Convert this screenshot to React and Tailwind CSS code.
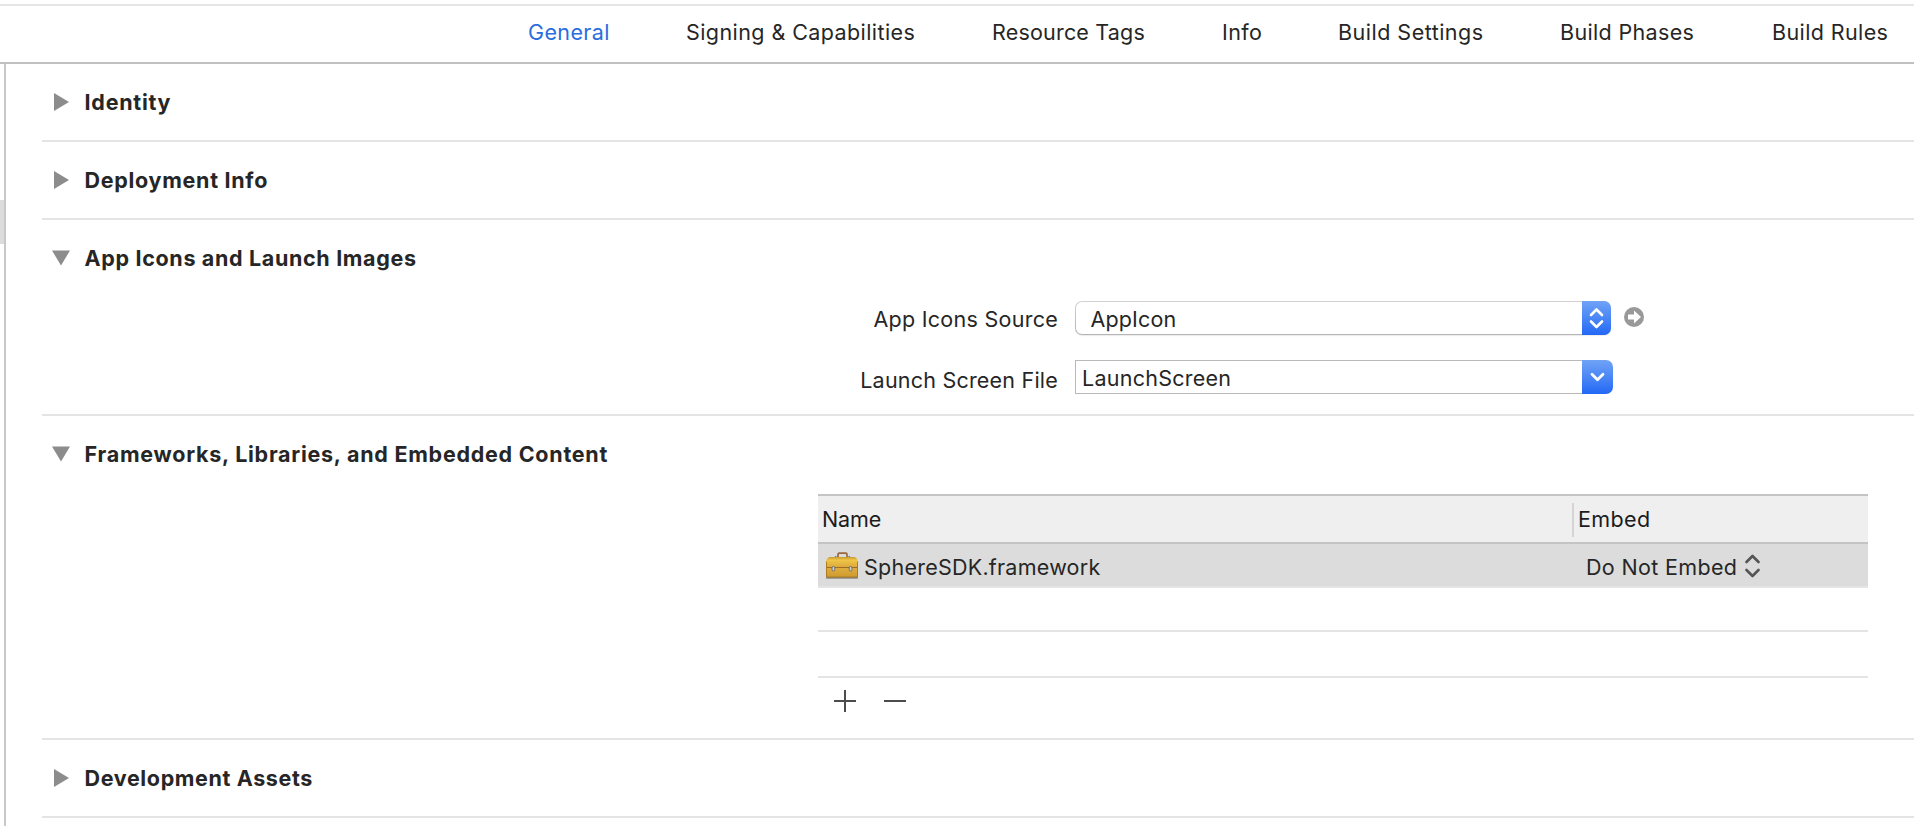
import React from 'react'

const tabs = [
  { label: 'General', className: 'text-[#2a6de0] tracking-[0.38px]' },
  { label: 'Signing & Capabilities', className: 'tracking-[0.42px]' },
  { label: 'Resource Tags', className: 'tracking-[0.19px]' },
  { label: 'Info', className: 'tracking-[0.36px]' },
  { label: 'Build Settings', className: 'tracking-[0.49px]' },
  { label: 'Build Phases', className: 'tracking-[0.34px]' },
  { label: 'Build Rules', className: 'tracking-[0.39px]' },
]

function TabBar() {
  return (
    <nav className="mt-1 grid h-[60px] shrink-0 grid-cols-[158px_306px_230px_116px_222px_212px_1fr] items-center border-y-2 border-t-[#e6e6e6] border-b-[#c0c0c0] pb-[5px] pl-[528px]">
      {tabs.map((t) => (
        <a key={t.label} className={t.className}>{t.label}</a>
      ))}
    </nav>
  )
}

function Disclosure({ open }) {
  return (
    <svg width="18" height="18" viewBox="0 0 18 18" className="shrink-0" fill="#8c8c8c">
      {open ? <path d="M0 1.5H18L9 16.5Z" /> : <path d="M2 0V18L17 9Z" />}
    </svg>
  )
}

function Section({ title, open = false, tracking, children }) {
  return (
    <section className="border-b-2 border-[#e4e4e4]">
      <h2 className="flex h-[76px] items-center gap-[14.6px] pl-[10px] font-bold">
        <span className="-mt-px flex"><Disclosure open={open} /></span>
        <span className={tracking}>{title}</span>
      </h2>
      {children}
    </section>
  )
}

function UpDown() {
  return (
    <svg width="29" height="34" viewBox="0 0 29 34" fill="none" stroke="#fff" strokeWidth="2.6" strokeLinecap="round" strokeLinejoin="round">
      <path d="M9 14L14.5 8.500L20 14M9 20.500L14.500 26L20 20.500" />
    </svg>
  )
}

function LaunchForm() {
  return (
    <div className="grid grid-cols-[1016px_auto] gap-x-[17px] pt-[5px] pb-[20px]">
      <label className="flex h-[34px] items-center justify-end pt-[1px] tracking-[0.27px]">App Icons Source</label>
      <div className="flex items-center gap-[13px]">
        <div className="flex h-[34px] w-[536px] overflow-hidden rounded-[7px] bg-gradient-to-b from-[#d2d2d2] to-[#b4b4b4] shadow-[0_1px_1px_rgba(0,0,0,0.08)]">
          <div className="my-px ml-px flex flex-1 items-center rounded-l-[6px] bg-white pt-[1px] pl-[14.5px] tracking-[0.15px]">AppIcon</div>
          <div className="w-[29px] bg-gradient-to-b from-[#70a3f5] to-[#2267f5]"><UpDown /></div>
        </div>
        <svg width="20" height="20" viewBox="0 0 20 20" className="-mt-[2px]">
          <circle cx="10" cy="10" r="10" fill="#999" />
          <path d="M4 7.500H10V3.500L17 10L10 16.500V12.500H4Z" fill="#fff" />
        </svg>
      </div>
      <label className="mt-[25px] flex h-[34px] items-center justify-end pt-[6px] tracking-[0.21px]">Launch Screen File</label>
      <div className="mt-[25px] flex h-[34px] w-[538px]">
        <div className="flex flex-1 items-center border border-r-0 border-[#b9b9b9] pt-[2px] pl-[6px] tracking-[0.25px]">LaunchScreen</div>
        <div className="w-[31px] overflow-hidden rounded-r-[7px] bg-gradient-to-b from-[#70a3f5] to-[#2267f5]">
          <svg width="31" height="34" viewBox="0 0 31 34" fill="none" stroke="#fff" strokeWidth="2.8" strokeLinecap="round" strokeLinejoin="round">
            <path d="M10 14.2L15.5 19.8L21 14.2" />
          </svg>
        </div>
      </div>
    </div>
  )
}

function Toolbox() {
  return (
    <svg width="32" height="28" viewBox="0 0 32 28" className="mt-[2px] shrink-0">
      <defs>
        <linearGradient id="lid" x1="0" y1="0" x2="0" y2="1">
          <stop offset="0" stopColor="#c99a2c" />
          <stop offset="0.3" stopColor="#efc648" />
          <stop offset="1" stopColor="#dba83a" />
        </linearGradient>
        <linearGradient id="box" x1="0" y1="0" x2="0" y2="1">
          <stop offset="0" stopColor="#dfae3f" />
          <stop offset="1" stopColor="#cf9a2e" />
        </linearGradient>
      </defs>
      <path d="M12 5.500V2.500Q12 1.200 13.200 1.200H19.800Q21 1.200 21 2.500V5.500" fill="none" stroke="#9a673a" strokeWidth="1.700" />
      <path d="M9 6L10 4M24 6L23 4" stroke="#777" strokeWidth="1.600" />
      <rect x="0" y="24.500" width="32" height="2.300" rx="0.800" fill="#8d8880" />
      <path d="M0 15.500V9.500Q1 5 4.500 5H27.500Q31 5 32 9.500V15.500Z" fill="url(#lid)" />
      <path d="M0 15.500H32V25H0Z" fill="url(#box)" />
      <path d="M0 15.500H32" stroke="#a06c1e" strokeWidth="1" />
      <path d="M0.500 25H31.500M0.500 9.500V25M31.500 9.500V25" stroke="#a87820" strokeWidth="0.900" />
      <rect x="6" y="14.500" width="2.800" height="4.500" rx="1.300" fill="#c9ccd0" stroke="#666" strokeWidth="0.900" />
      <rect x="23.200" y="14.500" width="2.800" height="4.500" rx="1.300" fill="#c9ccd0" stroke="#666" strokeWidth="0.900" />
    </svg>
  )
}

function FrameworksTable() {
  return (
    <div className="mt-[2px] ml-[776px] w-[1050px]">
      <div className="flex h-[50px] items-center border-y-2 border-[#c4c4c4] bg-[#efefef] text-[#1c1c1c]">
        <div className="flex-1 pb-[1px] pl-[4px] -tracking-[0.1px]">Name</div>
        <div className="mb-[-1px] h-[34px] w-[2px] bg-[#d4d4d4]" />
        <div className="w-[294px] pb-[1px] pl-[4px] tracking-[0.39px]">Embed</div>
      </div>
      <div className="flex h-[44px] items-center border-b-2 border-[#e4e4e4] bg-[#dcdcdc]">
        <div className="flex flex-1 items-center gap-[6px] pl-[8px]">
          <Toolbox />
          <span className="pt-[3px] tracking-[0.24px]">SphereSDK.framework</span>
        </div>
        <div className="flex w-[282px] items-center gap-[8px]">
          <span className="pt-[3px] tracking-[0.34px]">Do Not Embed</span>
          <svg width="15" height="24" viewBox="0 0 15 24" className="mt-[2px]" fill="none" stroke="#555" strokeWidth="2.600" strokeLinecap="round" strokeLinejoin="round">
            <path d="M1.500 8L7.500 2L13.500 8M1.500 16L7.500 22L13.500 16" />
          </svg>
        </div>
      </div>
      <div className="h-[44px] border-b-2 border-[#e4e4e4]" />
      <div className="h-[46px] border-b-2 border-[#e4e4e4]" />
      <div className="flex h-[60px] gap-[28px] pt-[12px] pl-[16px]">
        <svg width="22" height="22" viewBox="0 0 22 22" stroke="#4c4c4c" strokeWidth="2"><path d="M0 11H22M11 0V22" /></svg>
        <svg width="22" height="22" viewBox="0 0 22 22" stroke="#4c4c4c" strokeWidth="2"><path d="M0 11H22" /></svg>
      </div>
    </div>
  )
}

export default function App() {
  return (
    <div className="flex h-screen flex-col overflow-hidden bg-white font-['Inter',sans-serif] text-[21.5px] leading-[26px] whitespace-nowrap text-[#262626]">
      <TabBar />
      <div className="flex min-h-0 flex-1">
        <aside className="w-[6px] shrink-0 border-r-2 border-[#c8c8c8] pt-[136px]">
          <div className="h-[44px] bg-[#dcdcdc]" />
        </aside>
        <main className="flex-1 pl-[36px]">
          <Section title="Identity" tracking="tracking-[0.74px]" />
          <Section title="Deployment Info" tracking="tracking-[0.7px]" />
          <Section title="App Icons and Launch Images" open tracking="tracking-[0.66px]">
            <LaunchForm />
          </Section>
          <Section title="Frameworks, Libraries, and Embedded Content" open tracking="tracking-[0.74px]">
            <FrameworksTable />
          </Section>
          <Section title="Development Assets" tracking="tracking-[0.63px]" />
        </main>
      </div>
    </div>
  )
}
